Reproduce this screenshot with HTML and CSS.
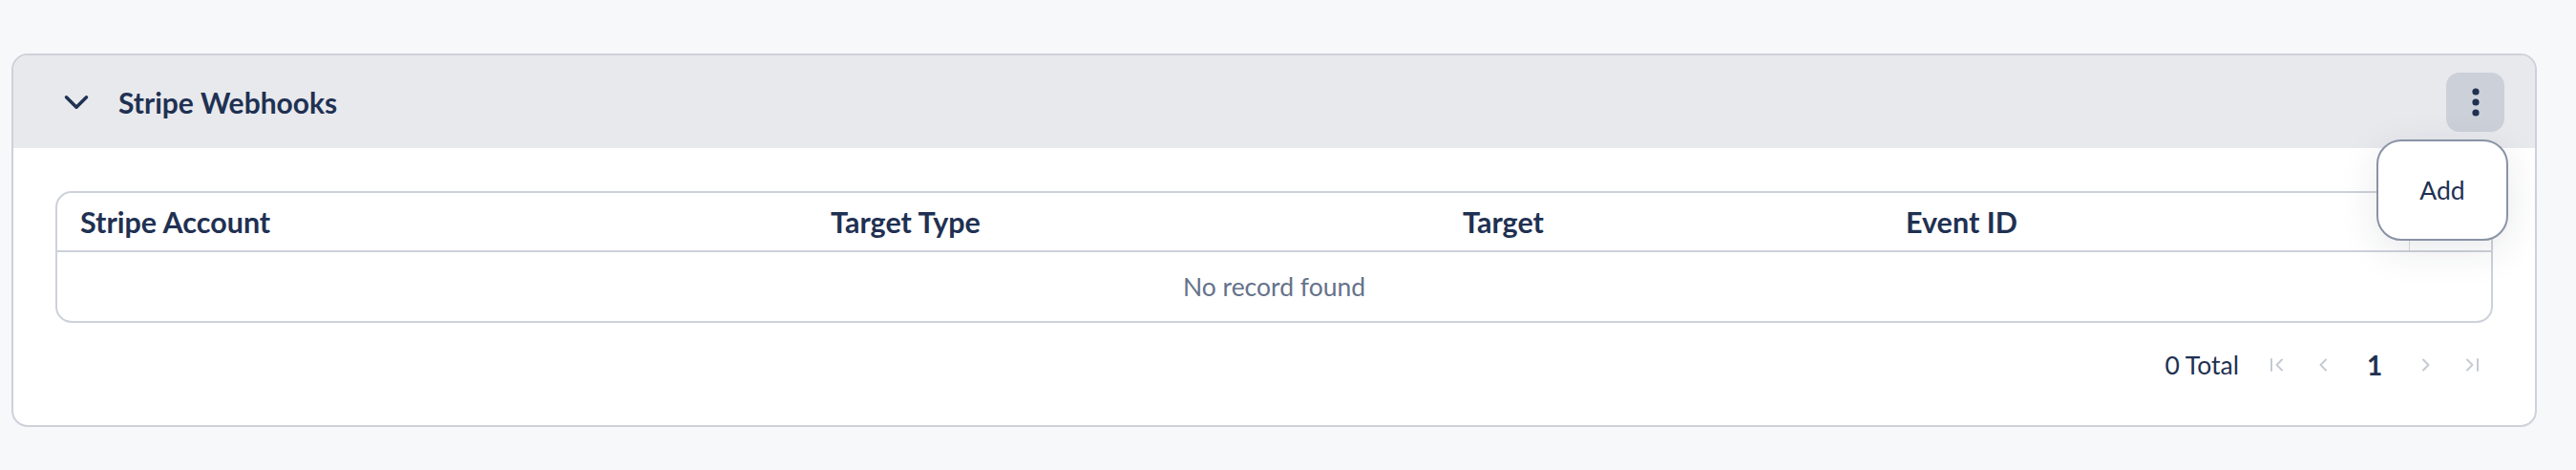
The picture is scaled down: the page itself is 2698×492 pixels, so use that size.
FILE: index.html
```html
<!DOCTYPE html>
<html lang="en">
<head>
<meta charset="utf-8">
<title>Stripe Webhooks</title>
<link rel="stylesheet" href="styles.css">
</head>
<body>
<div class="page">
  <section class="card">
    <header class="card-header">
      <svg class="chevron" viewBox="0 0 24 24" width="42" height="42" fill="none" stroke="currentColor" stroke-width="2" stroke-linecap="round" stroke-linejoin="round"><path d="M6 9l6 6 6-6"/></svg>
      <h2 class="card-title">Stripe Webhooks</h2>
      <div class="menu">
        <button class="kebab" type="button" aria-label="More">
          <svg viewBox="0 0 8 30" width="8" height="30"><circle cx="4" cy="4" r="3.6" fill="currentColor"/><circle cx="4" cy="15" r="3.6" fill="currentColor"/><circle cx="4" cy="26" r="3.6" fill="currentColor"/></svg>
        </button>
        <div class="popup">Add</div>
      </div>
    </header>
    <div class="card-body">
      <div class="table-wrap">
        <table class="data">
          <colgroup>
            <col class="c1"><col class="c2"><col class="c3"><col class="c4"><col class="c5">
          </colgroup>
          <thead>
            <tr>
              <th>Stripe Account</th>
              <th>Target Type</th>
              <th>Target</th>
              <th>Event ID</th>
              <th class="actions"></th>
            </tr>
          </thead>
          <tbody>
            <tr><td class="empty" colspan="5">No record found</td></tr>
          </tbody>
        </table>
      </div>
      <div class="pager">
        <span class="total">0 Total</span>
        <span class="pbtn"><svg viewBox="0 0 16 16" width="16" height="16" fill="none" stroke="currentColor" stroke-width="2" stroke-linecap="round" stroke-linejoin="round"><path d="M2 2v12M13 2.5L7.5 8l5.5 5.5"/></svg></span>
        <span class="pbtn"><svg viewBox="0 0 16 16" width="16" height="16" fill="none" stroke="currentColor" stroke-width="2" stroke-linecap="round" stroke-linejoin="round"><path d="M11 2.5L5.5 8l5.5 5.5"/></svg></span>
        <span class="pbtn page-num">1</span>
        <span class="pbtn"><svg viewBox="0 0 16 16" width="16" height="16" fill="none" stroke="currentColor" stroke-width="2" stroke-linecap="round" stroke-linejoin="round"><path d="M5 2.5L10.5 8 5 13.5"/></svg></span>
        <span class="pbtn"><svg viewBox="0 0 16 16" width="16" height="16" fill="none" stroke="currentColor" stroke-width="2" stroke-linecap="round" stroke-linejoin="round"><path d="M3 2.5L8.5 8 3 13.5M14 2v12"/></svg></span>
      </div>
    </div>
  </section>
</div>
</body>
</html>
```
FILE: styles.css
```css
* { box-sizing: border-box; }
html, body {
  margin: 0;
  padding: 0;
  background: #f7f8fa;
  font-family: Lato, "Noto Sans", sans-serif;
  color: #1f3152;
}
.page {
  padding: 56px 41px 0 12px;
}
.card {
  border: 2px solid #cdd1d9;
  border-radius: 17px;
  background: #ffffff;
  overflow: visible;
}
.card-header {
  display: flex;
  align-items: center;
  height: 97px;
  padding: 0 32px 0 45px;
  background: #e8e9ed;
  border-radius: 15px 15px 0 0;
}
.chevron {
  flex: none;
  color: #1f3152;
  display: block;
}
.card-title {
  margin: 0 0 0 23px;
  font-size: 30px;
  font-weight: 700;
  flex: 1;
  line-height: 1;
}
.menu {
  position: relative;
}
.kebab {
  width: 61px;
  height: 62px;
  border: none;
  border-radius: 14px;
  background: #cbd0d9;
  color: #1f3152;
  display: flex;
  align-items: center;
  justify-content: center;
  padding: 0;
}
.kebab svg { display: block; }
.popup {
  position: absolute;
  right: -4px;
  top: 70px;
  width: 138px;
  height: 106px;
  border: 2px solid #8a93a5;
  border-radius: 26px;
  background: #ffffff;
  box-shadow: 0 10px 40px rgba(30, 40, 60, 0.10);
  display: flex;
  align-items: center;
  justify-content: center;
  font-size: 26.5px;
  color: #1f3152;
  z-index: 2;
}
.card-body {
  padding: 45px 44px 39px 44px;
}
.table-wrap {
  border: 2px solid #cdd1d9;
  border-radius: 17px;
  overflow: hidden;
}
.data {
  width: 100%;
  border-collapse: collapse;
  table-layout: fixed;
}
.c1 { width: 786px; }
.c2 { width: 662px; }
.c3 { width: 464px; }
.c4 { width: 551px; }
.c5 { width: 86px; }
.data th {
  height: 61px;
  padding: 0 24px;
  text-align: left;
  font-size: 30.5px;
  font-weight: 700;
  border-bottom: 2px solid #cdd1d9;
  vertical-align: middle;
}
.data th.actions {
  border-left: 1px solid #d6d9e0;
}
.data td.empty {
  height: 73px;
  text-align: center;
  font-size: 26.5px;
  color: #65728a;
  vertical-align: middle;
}
.pager {
  display: flex;
  align-items: center;
  justify-content: flex-end;
  margin-top: 20px;
  margin-right: -2px;
  height: 48px;
}
.total {
  font-size: 26.5px;
  margin-right: 16px;
}
.pbtn {
  width: 48px;
  height: 48px;
  display: flex;
  align-items: center;
  justify-content: center;
  color: #c5cad3;
}
.pbtn svg { display: block; }
.page-num {
  width: 60px;
  color: #1f3152;
  font-weight: 700;
  font-size: 28px;
}
```
